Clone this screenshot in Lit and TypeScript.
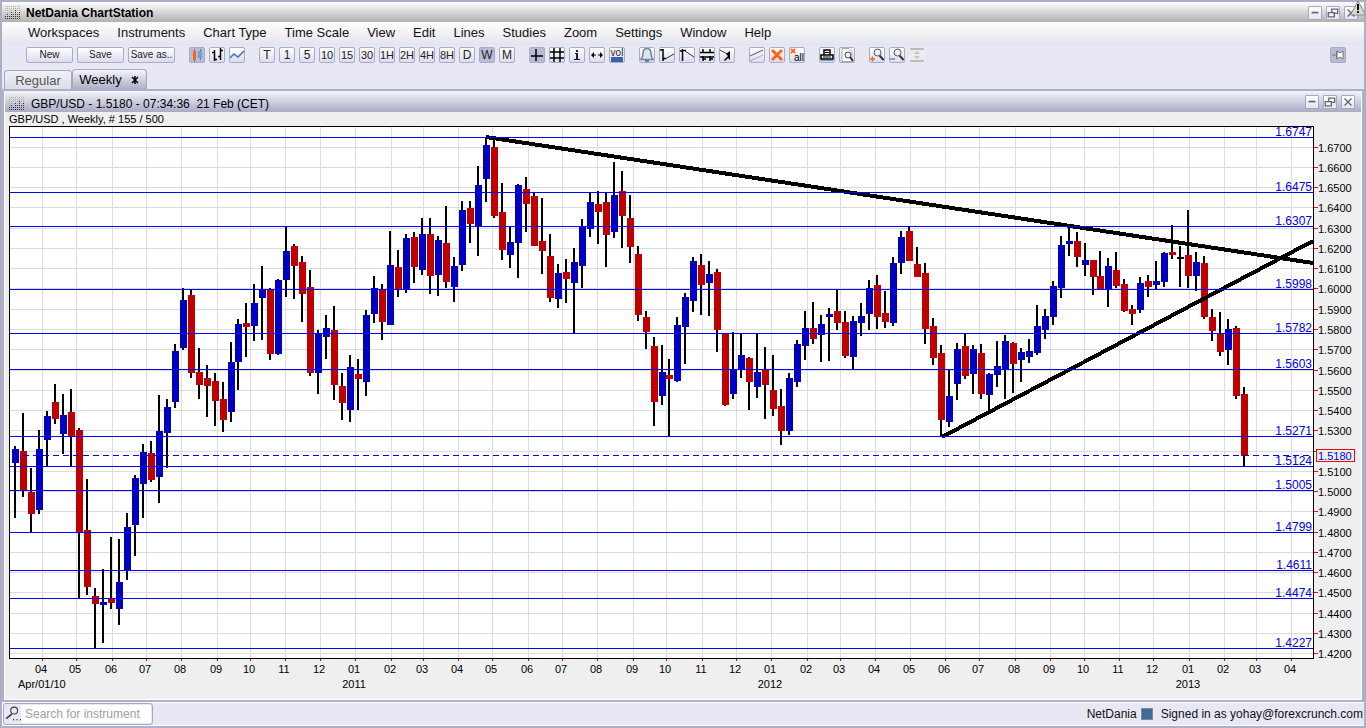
import { LitElement, html, css, svg } from "lit";
import { customElement, state } from "lit/decorators.js";

type Glyph = ReturnType<typeof svg>;
type Candle = [number, number, number, number, string];

const MENUS = ["Workspaces", "Instruments", "Chart Type", "Time Scale", "View", "Edit", "Lines", "Studies", "Zoom", "Settings", "Window", "Help"];
const SCALES = ["T", "1", "5", "10", "15", "30", "1H", "2H", "4H", "8H", "D", "W", "M"];

// high, body top, body bottom, low (plot units) and direction: b up, r down, k flat
const RAW = `446 449 463 518 b|413 451 490 497 r|468 492 514 532 r|430 449 510 514 b|411 416 440 466 b|384 402 419 424 r|394 415 434 454 b|389 412 436 466 r|428 430 532 598 r|479 530 587 595 r|588 596 604 648 r|569 602 605 643 b|537 598 603 609 r|539 582 609 625 b|513 527 570 580 b|475 478 525 556 b|444 452 484 518 b|441 453 480 482 r|395 431 477 503 b|399 407 433 468 b|344 351 402 408 b|288 300 348 350 b|289 295 373 378 r|348 372 385 399 r|365 378 386 417 r|373 381 401 426 r|382 399 420 432 r|342 362 412 422 b|319 324 362 390 b|303 323 327 357 r|284 303 326 341 b|266 289 298 340 b|288 289 354 360 r|279 280 354 355 b|227 251 280 297 b|244 246 266 299 r|256 262 294 322 r|270 287 373 376 r|330 333 373 394 b|315 328 337 359 b|306 330 385 400 r|373 386 403 420 r|355 367 410 422 b|359 374 379 410 r|310 315 382 396 b|276 288 314 323 b|284 289 322 340 r|231 265 325 325 b|250 267 289 297 r|234 238 289 293 b|232 237 267 283 r|218 234 270 275 b|218 234 276 294 r|236 240 275 296 b|206 243 282 288 r|257 266 287 302 b|201 210 265 271 b|201 208 224 243 r|166 185 227 256 b|137 145 179 202 b|140 147 216 218 r|183 212 250 260 r|227 242 255 268 b|184 185 243 278 b|177 189 204 232 r|193 196 246 246 r|198 241 251 274 r|234 256 298 302 r|264 273 299 308 b|259 272 279 303 r|248 262 283 333 b|219 226 266 288 b|192 202 229 237 b|191 204 212 244 r|192 202 235 267 r|162 195 232 238 b|171 191 216 248 r|195 218 247 263 r|246 254 315 321 r|311 317 332 349 r|337 346 402 426 r|345 372 396 405 b|359 375 379 436 r|317 325 381 382 b|293 297 327 364 b|257 261 301 312 b|254 265 285 315 r|261 274 283 316 b|269 272 330 352 r|333 333 405 406 r|332 369 394 399 b|333 355 369 378 b|357 358 382 410 r|333 372 387 398 b|347 369 385 419 r|355 390 409 416 r|389 406 431 445 r|373 378 431 435 b|340 344 382 387 b|311 328 346 360 b|302 328 339 344 r|315 324 335 362 b|308 314 317 361 b|289 311 323 330 r|311 322 356 358 r|316 321 357 369 b|303 316 323 336 b|280 288 314 330 b|275 285 317 329 r|291 313 322 328 r|257 263 323 326 b|231 237 263 274 b|226 231 261 261 r|247 264 277 277 r|263 273 329 344 r|318 326 358 365 r|345 353 420 437 r|370 396 422 427 b|343 349 384 400 b|333 346 376 379 r|345 349 374 394 b|344 353 394 399 r|373 374 395 411 b|341 366 375 387 b|335 341 370 399 b|342 343 364 393 r|348 352 360 382 b|339 351 357 363 b|305 326 353 355 b|309 316 330 339 b|281 286 317 325 b|236 245 288 298 b|226 241 244 256 b|232 241 257 267 r|243 260 265 276 b|260 260 277 295 r|251 276 289 289 r|258 266 289 307 b|252 270 286 288 r|279 284 311 312 r|305 309 314 325 r|277 283 310 313 b|275 281 287 297 r|261 281 285 289 b|252 253 282 287 b|225 252 255 259 r|246 257 259 287 k|210 255 276 288 r|252 262 276 291 b|256 263 317 319 r|309 317 331 341 r|312 333 352 356 r|319 329 350 365 b|326 328 396 399 r|387 394 456 466 r`;
const CANDLES: Candle[] = RAW.split("|").map((row) => {
  const [h, t, b, l, d] = row.split(" ");
  return [+h, +t, +b, +l, d];
});
const COLORS: Record<string, string> = { b: "#0000c0", r: "#c00000", k: "#000000" };

const LEVELS: [number, string][] = [
  [137, "1.6747"], [192, "1.6475"], [226, "1.6307"], [289, "1.5998"], [333, "1.5782"], [369, "1.5603"],
  [436, "1.5271"], [466, "1.5124"], [490, "1.5005"], [532, "1.4799"], [570, "1.4611"], [598, "1.4474"], [648, "1.4227"],
];
const LAST = 455;
const MONTHS = [42, 76, 112, 146, 181, 217, 250, 285, 320, 355, 391, 423, 458, 492, 528, 562, 597, 633, 666, 702, 736, 771, 807, 840, 875, 910, 945, 979, 1015, 1050, 1084, 1119, 1153, 1189, 1224, 1256, 1291];
const PRICES = Array.from({ length: 26 }, (_, k) => ({ y: Math.floor(147.05 + 20.27 * k), text: (1.67 - k / 100).toFixed(4) }));

const icon = (g: Glyph) => html`<svg class="glyph" viewBox="1 1 14 14" aria-hidden="true">${g}</svg>`;
const lens = svg`<path d="M10.500 8.500l4 4.500" stroke="#333" stroke-width="2"/><circle cx="8.500" cy="5.500" r="3.500" fill="#eef" stroke="#555"/>`;

const I = {
  candles: svg`<path d="M5.500 2v13M11.500 2v11" stroke="#777"/><path d="M4 4h3v9H4z" fill="#ff6410"/><path d="M9 4h4v7H9z" fill="#6fa0d8"/>`,
  bars: svg`<path d="M5.500 3v11M3 5.500h2M6 12.500h2M11.500 1v12M9 9.500h2M12 3.500h2" stroke="#000" stroke-width="1.500" fill="none"/>`,
  line: svg`<path d="M1 11l4-4 4 3 6-6" stroke="#3f6fb8" stroke-width="1.500" fill="none"/>`,
  cross: svg`<path d="M7 2v12M2 9h12" stroke="#000" stroke-width="1.500"/>`,
  grid: svg`<path d="M5 1v14M11 1v14M1 5h14M1 11h14" stroke="#000" stroke-width="1.500"/>`,
  info: svg`<path d="M7 3h2v2H7zM6 6h3v6h2v1H5v-1h2V7H6z" fill="#222"/>`,
  arrows: svg`<path d="M2 8l3-3v6zM14 8l-3-3v6z" fill="#000"/><path d="M5 8h2M9 8h2" stroke="#000"/>`,
  bell: svg`<path d="M8 1.500c-3 0-4 2-4 5 0 4-1 4-2 6h12c-1-2-2-2-2-6 0-3-1-5-4-5z" fill="#dce6ee" stroke="#6f8298" stroke-width="1.500"/><path d="M6 13h4v2H6z" fill="#6f8298"/>`,
  up: svg`<path d="M4 2v12M1 3h3M4 11.500h3" stroke="#000" stroke-width="1.500"/><path d="M6 12l9-5" stroke="#333"/>`,
  down: svg`<path d="M3.500 2v12M1 4h2M4 3.500h3" stroke="#000" stroke-width="1.500"/><path d="M6 4l9 6" stroke="#333"/>`,
  range: svg`<path d="M4 2v4M11 2v4M4 9v5M11 9v5M1 5.500h14M1 10h14M4 12h3M11 12h3" stroke="#000" stroke-width="1.500"/>`,
  pointer: svg`<path d="M1 3l9 5" stroke="#333"/><path d="M11 4v9l-2-2-3 3-1-1 4-4-2-2z" fill="#000"/>`,
  parallel: svg`<path d="M1 9L14 3" stroke="#555"/><path d="M1 14L14 8" stroke="#aaa"/>`,
  cut: svg`<path d="M3 3l10 10M13 3L3 13" stroke="#ff6410" stroke-width="3"/>`,
  smallCut: svg`<path d="M3 3l10 10M13 3L3 13" stroke="#ff6410" stroke-width="4"/>`,
  printer: svg`<path d="M5 8V3h6v5M2 8h12v4H2z" fill="#fff" stroke="#000" stroke-width="1.500"/><path d="M4 10h8M6 5.500h4" stroke="#000"/><path d="M2 13h12v1H2z" fill="#6fa0d8"/>`,
  preview: svg`<path d="M3 1.500h7l3 3v10H3z" fill="#fff" stroke="#aaa"/><circle cx="9" cy="8" r="3" fill="#eef" stroke="#444"/><path d="M11 10l3 4" stroke="#333" stroke-width="2"/>`,
  zoomIn: svg`${lens}<path d="M1 12h5M3.500 9.500v5" stroke="#ff6410" stroke-width="1.500"/>`,
  zoomOut: svg`${lens}<path d="M1 12h5" stroke="#4f90c8" stroke-width="1.500"/>`,
  fit: svg`<path d="M1 2h14M1 14h14" stroke="#bbb" stroke-width="2"/><path d="M5 7l3-3 3 3zM5 9l3 3 3-3z" fill="#c4c4c4"/>`,
  pin: svg`<path d="M2 8h4M6.500 4v8" stroke="#777"/><path d="M7 4l3 2 3-2v8l-3-2-3 2z" fill="#fff" stroke="#777"/>`,
  min: svg`<path d="M4 7.500h8" stroke="#666" stroke-width="2"/>`,
  restore: svg`<path d="M6.500 3.500h7v5h-7z" fill="none" stroke="#666" stroke-width="1.500"/><path d="M2.500 7.500h7v5h-7z" fill="#f4f4fa" stroke="#666" stroke-width="1.500"/>`,
  close: svg`<path d="M4 4l8 8M12 4l-8 8" stroke="#666" stroke-width="1.500"/>`,
  search: svg`<circle cx="9" cy="5" r="3" fill="none" stroke="#444"/><path d="M7 8l-5 4" stroke="#444" stroke-width="1.500"/><path d="M8 13h1M11 13h1M14 13h1" stroke="#000"/>`,
};

const grip = html`<svg class="grip" viewBox="0 0 16 14" aria-hidden="true">
  ${[0, 1, 2, 3, 4, 5, 6].map((r) => [0, 1, 2, 3, 4, 5, 6, 7].map((c) => svg`<rect x=${c * 2} y=${r * 2} width="1" height="1" fill=${r > 6 - [2, 3, 2, 4, 3, 5, 3, 4][c] ? "#333" : "#b4ad9c"}/>`))}
</svg>`;

@customElement("price-chart")
export class PriceChart extends LitElement {
  static styles = css`
    :host { display: block; }
    svg { display: block; width: 100%; height: auto; font-family: "Liberation Sans", Arial, sans-serif; font-size: 11px; }
    .crisp { shape-rendering: crispEdges; }
    .level { fill: #0000e0; font-size: 12px; text-anchor: end; }
    .month { text-anchor: middle; }
    .last { fill: #0000e0; }
  `;

  render() {
    // the tag of the last price takes the place of the axis label beneath it
    const labels = PRICES.filter((p) => Math.abs(p.y - LAST) > 8);
    return html`<svg viewBox="5 126 1356 570" role="img" aria-label="GBP/USD weekly candlestick chart">
      <g class="crisp">
        <rect x="9" y="126" width="1305" height="533" fill="#000"/>
        <rect x="10" y="127" width="1303" height="531" fill="#fff"/>
        ${MONTHS.map((x) => svg`<rect x=${x} y="127" width="1" height="531" fill="#dcdcdc"/><rect x=${x} y="659" width="1" height="2" fill="#f00"/>`)}
        ${PRICES.map((p) => svg`<rect x="10" y=${p.y} width="1303" height="1" fill="#dcdcdc"/><rect x="1314" y=${p.y} width="4" height="1" fill="#f00"/>`)}
        ${CANDLES.map(([h, t, b, l, d], i) => {
          const x = 12 + 8 * i - Math.floor((i + 26) / 54);
          return svg`<rect x=${x + 2} y=${h} width="2" height=${l - h} fill="#000"/><rect x=${x} y=${t} width="7" height=${b - t} fill=${COLORS[d]}/>`;
        })}
        <path d="M486 137L1313 263M942 437L1313 241" stroke="#000" stroke-width="4"/>
        ${LEVELS.map(([y]) => svg`<rect x="10" y=${y} width="1303" height="1" fill="#00f"/>`)}
        <path d=${`M13 ${LAST}.5H1313`} stroke="#00f" stroke-dasharray="6 4"/>
      </g>
      ${LEVELS.map(([y, t]) => svg`<text class="level" x="1312" y=${y - 1}>${t}</text>`)}
      ${labels.map((p) => svg`<text x="1318" y=${p.y + 5}>${p.text}</text>`)}
      <rect class="crisp" x="1316.500" y="449.500" width="38" height="12" fill="#efefef" stroke="#f00"/>
      <text class="last" x="1318" y="460">1.5180</text>
      ${MONTHS.map((x, i) => svg`<text class="month" x=${x - 1} y="673">${String(((i + 3) % 12) + 1).padStart(2, "0")}</text>`)}
      <text x="18" y="688">Apr/01/10</text>
      <text class="month" x="354" y="688">2011</text>
      <text class="month" x="770" y="688">2012</text>
      <text class="month" x="1188" y="688">2013</text>
    </svg>`;
  }
}

@customElement("app-root")
export class AppRoot extends LitElement {
  @state() private scale = "W";

  static styles = css`
    :host { display: block; font-family: "Liberation Sans", Arial, sans-serif; font-size: 13px; color: #111; }
    * { box-sizing: border-box; }
    button, input { font: inherit; color: inherit; margin: 0; padding: 0; }
    .frame { position: relative; display: flex; flex-direction: column; min-height: 100vh; background: #adafc6; padding: 2px 0; }
    .glyph { display: block; width: 100%; height: 100%; }
    .grip { width: 16px; height: 14px; flex: none; }
    .bar { display: flex; align-items: center; }
    .title { height: 20px; margin: 0 2px; padding: 2px 6px 0 3px; gap: 5px; background: linear-gradient(#fff, #b0b0b0); }
    .title h1 { flex: 1; margin: 0; font-size: 12px; font-weight: bold; color: #000; }
    .win { display: flex; gap: 4px; }
    .win button { width: 14px; height: 14px; border: 1px solid #a4a8c4; background: linear-gradient(#fff, #e4e4f2); border-radius: 1px; }
    .alert { position: absolute; top: 0; right: 0; width: 16px; height: 16px; }
    .menu { height: 23px; margin: 0 2px; padding: 0 26px 2px; gap: 18px; background: linear-gradient(#fff, #e4e4ee); }
    .menu button { border: 0; background: none; }
    .tools { height: 24px; margin: 0 2px; padding: 0 18px 4px 24px; gap: 14px; background: #e8e8f4; }
    .group { display: flex; gap: 4px; }
    .tool { width: 16px; height: 16px; border: 1px solid #a8acc8; border-radius: 2px; background: linear-gradient(#fff, #dcdcee); font-size: 12px; line-height: 14px; display: flex; justify-content: center; overflow: hidden; color: #222; }
    .small { width: 47px; font-size: 10px; }
    .tight { font-size: 11px; }
    .on { background: #b9bbd6; }
    .plain { border-color: transparent; background: #ececf0; }
    .push { margin-left: auto; }
    .vol { display: flex; flex-direction: column; align-items: center; font-size: 10px; line-height: 8px; }
    .wave { width: 12px; height: 5px; background: #3f5fa8; }
    .xall { flex-direction: column; align-items: flex-end; font-size: 10px; line-height: 8px; color: #000; }
    .xall .glyph { width: 6px; height: 6px; align-self: flex-start; }
    .tabs { display: flex; align-items: flex-end; height: 20px; margin: 0 2px; padding-left: 2px; background: #e8e8f4; }
    .tab { height: 19px; border: 1px solid #a4a8c4; border-bottom: 0; border-radius: 4px 4px 0 0; width: 68px; background: linear-gradient(#f0f0f6, #dcdce8); color: #555; }
    .tab.current { width: 75px; height: 20px; background: linear-gradient(#f4f4fa, #adafc6); color: #000; display: flex; align-items: center; justify-content: center; gap: 8px; }
    .panel { flex: 1; margin: 2px 4px; background: #efefef; border: 1px solid #fff; border-top: 0; }
    .head { height: 21px; padding: 0 6px 0 4px; gap: 6px; background: linear-gradient(#f4f4fb, #a9abc4); }
    .head h2 { flex: 1; margin: 0; font-size: 12px; font-weight: normal; color: #000; white-space: pre; padding-top: 4px; }
    .head .grip { margin-top: 4px; }
    .caption { height: 14px; line-height: 14px; padding-left: 4px; font-size: 11px; margin: 0; color: #000; white-space: pre; }
    .status { height: 24px; margin: 0 2px; padding: 0 1px 0 0; gap: 8px; background: #e8e8f4; border: 1px solid #fff; border-right: 0; font-size: 12px; }
    .search { display: flex; align-items: center; width: 150px; height: 22px; border: 1px solid #a4a8c4; border-radius: 3px; padding: 1px; margin-right: auto; }
    .search .glyph { width: 16px; height: 16px; flex: none; }
    .search input { flex: 1; min-width: 0; height: 18px; border: 0; padding: 0 4px; background: #fff; }
    .search input::placeholder { color: #a0a0a0; opacity: 1; }
    .brand { display: flex; align-items: center; gap: 4px; }
    .dot { width: 12px; height: 12px; background: #3f6a9c; border: 1px solid #888; }
  `;

  private win() {
    return html`<div class="win">
      <button aria-label="Minimize">${icon(I.min)}</button>
      <button aria-label="Restore">${icon(I.restore)}</button>
      <button aria-label="Close">${icon(I.close)}</button>
    </div>`;
  }

  private tool(label: string, g: Glyph, extra = "") {
    return html`<button class="tool ${extra}" aria-label=${label}>${icon(g)}</button>`;
  }

  render() {
    return html`<div class="frame">
      <header class="bar title">${grip}<h1>NetDania ChartStation</h1>${this.win()}</header>
      <svg class="alert" viewBox="0 0 16 16" aria-hidden="true">
        <path d="M8 1L15.500 15H0.500z" fill="#d8d8d4" stroke="#888"/><path d="M7 4h2v6H7zM7 11h2v2H7z" fill="#111"/>
      </svg>
      <nav class="bar menu">${MENUS.map((m) => html`<button>${m}</button>`)}</nav>
      <div class="bar tools">
        <div class="group">${["New", "Save", "Save as.."].map((t) => html`<button class="tool small">${t}</button>`)}</div>
        <div class="group">${this.tool("Candles", I.candles, "on")}${this.tool("Bars", I.bars)}${this.tool("Line", I.line)}</div>
        <div class="group">${SCALES.map((s) => html`<button class="tool ${s.length > 1 ? "tight" : ""} ${s === this.scale ? "on" : ""}" @click=${() => (this.scale = s)}>${s}</button>`)}</div>
        <div class="group">
          ${this.tool("Crosshair", I.cross, "on")}${this.tool("Grid", I.grid)}${this.tool("Info", I.info)}${this.tool("Spread", I.arrows)}
          <button class="tool vol">vol<span class="wave"></span></button>
        </div>
        <div class="group">${this.tool("Alert", I.bell)}${this.tool("Support", I.up)}${this.tool("Resistance", I.down)}${this.tool("Range", I.range)}${this.tool("Arrow", I.pointer)}</div>
        <div class="group">${this.tool("Channel", I.parallel)}${this.tool("Delete", I.cut)}<button class="tool xall">${icon(I.smallCut)}<span>all</span></button></div>
        <div class="group">${this.tool("Print", I.printer)}${this.tool("Preview", I.preview)}</div>
        <div class="group">${this.tool("Zoom in", I.zoomIn)}${this.tool("Zoom out", I.zoomOut)}${this.tool("Fit", I.fit, "plain")}</div>
        ${this.tool("Pin", I.pin, "on push")}
      </div>
      <div class="tabs">
        <button class="tab">Regular</button>
        <button class="tab current">Weekly <svg width="10" height="10" viewBox="0 0 10 10" aria-hidden="true"><path d="M5 1v8M2 2l6 6M8 2L2 8" stroke="#000" stroke-width="1.500"/></svg></button>
      </div>
      <main class="panel">
        <div class="bar head">${grip}<h2>GBP/USD - 1.5180 - 07:34:36  21 Feb (CET)</h2>${this.win()}</div>
        <p class="caption">GBP/USD , Weekly, # 155 / 500</p>
        <price-chart></price-chart>
      </main>
      <footer class="bar status">
        <label class="search">${icon(I.search)}<input type="text" aria-label="Search for instrument" placeholder="Search for instrument"></label>
        <span class="brand">NetDania <span class="dot"></span></span>
        <span>Signed in as yohay@forexcrunch.com</span>
      </footer>
    </div>`;
  }
}
